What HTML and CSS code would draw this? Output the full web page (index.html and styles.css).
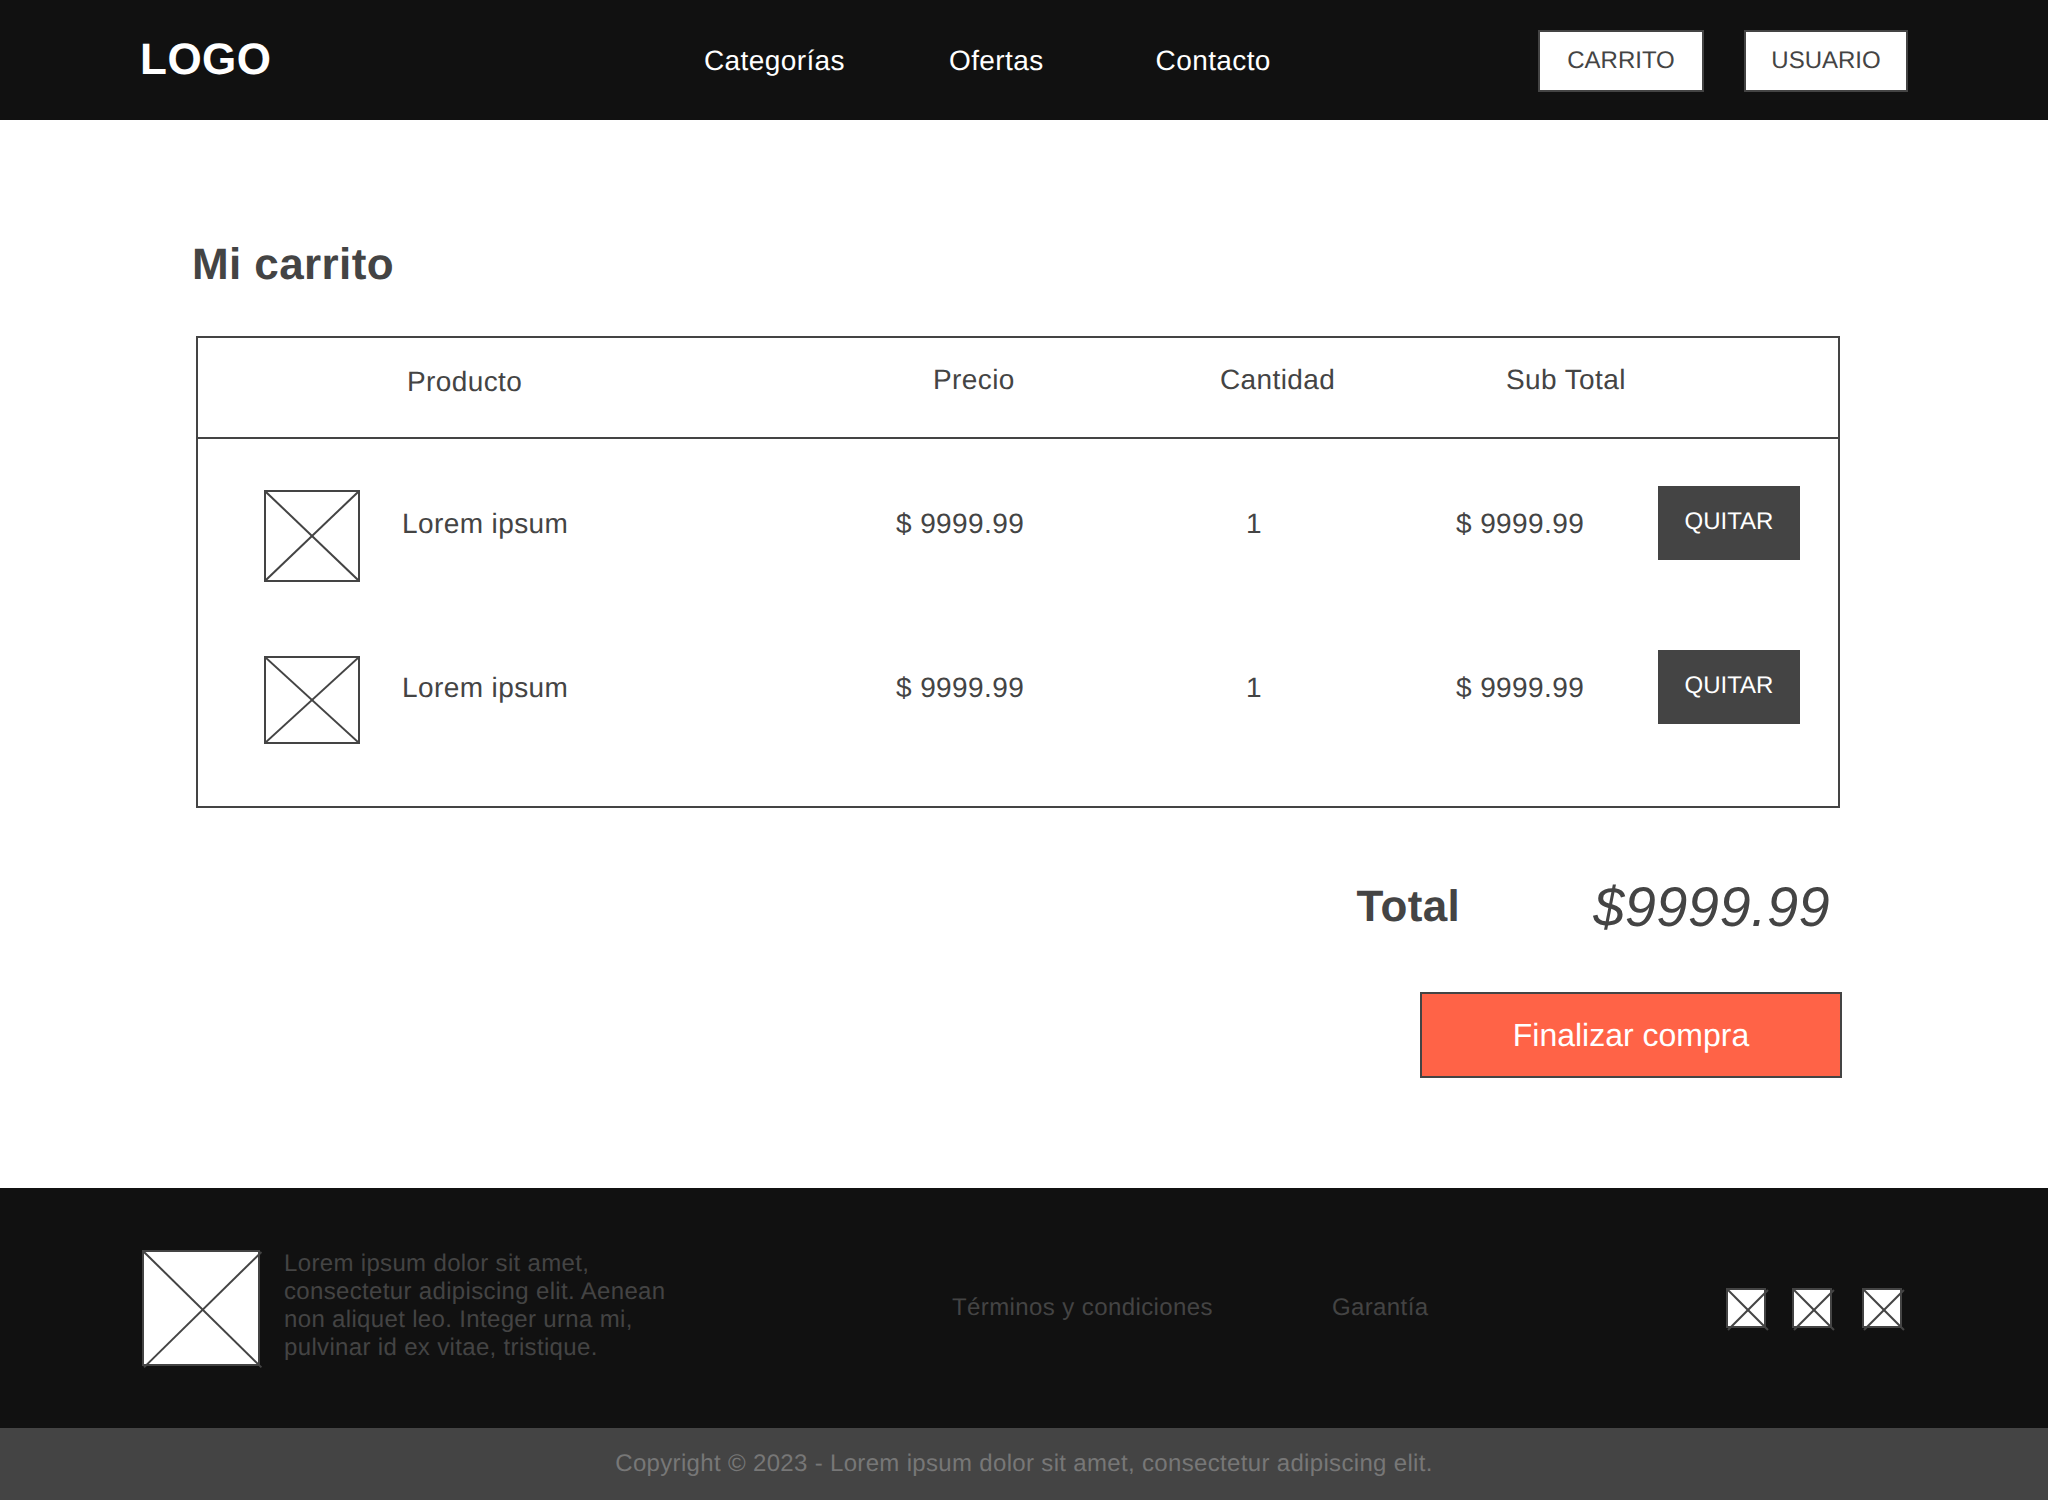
FILE: index.html
```html
<!DOCTYPE html>
<html>
<head>
    <title>Mi carrito</title>
    <link rel="stylesheet" href="styles.css">
</head>
<body>
<header class="header">
    <div class="logo">LOGO</div>
    <nav class="nav">
        <a href="#">Categorías</a>
        <a href="#">Ofertas</a>
        <a href="#" class="nav-last">Contacto</a>
    </nav>
    <div class="header-buttons">
        <button class="btn-outline btn-cart">CARRITO</button>
        <button class="btn-outline btn-user">USUARIO</button>
    </div>
</header>

<main class="main">
    <h1 class="title">Mi carrito</h1>

    <div class="cart">
        <div class="cart-head">
            <span class="head-first">Producto</span>
            <span>Precio</span>
            <span>Cantidad</span>
            <span>Sub Total</span>
        </div>
        <div class="cart-body">
            <div class="cart-row">
                <svg class="ph ph-row1" viewBox="0 0 100 100" preserveAspectRatio="none">
                    <line x1="0" y1="0" x2="100" y2="100"/>
                    <line x1="100" y1="0" x2="0" y2="100"/>
                </svg>
                <span class="cell">Lorem ipsum</span>
                <span class="cell">$ 9999.99</span>
                <span class="cell">1</span>
                <span class="cell">$ 9999.99</span>
                <button class="btn-remove">QUITAR</button>
            </div>
            <div class="cart-row">
                <svg class="ph ph-row2" viewBox="0 0 100 100" preserveAspectRatio="none">
                    <line x1="0" y1="0" x2="100" y2="100"/>
                    <line x1="100" y1="0" x2="0" y2="100"/>
                </svg>
                <span class="cell">Lorem ipsum</span>
                <span class="cell">$ 9999.99</span>
                <span class="cell">1</span>
                <span class="cell">$ 9999.99</span>
                <button class="btn-remove">QUITAR</button>
            </div>
        </div>
    </div>

    <div class="total">
        <span class="total-label">Total</span>
        <span class="total-value">$9999.99</span>
    </div>
    <div class="checkout">
        <button class="btn-checkout">Finalizar compra</button>
    </div>
</main>

<footer class="footer">
    <div class="footer-about">
        <svg class="ph ph-footer ph-over" viewBox="0 0 100 100" preserveAspectRatio="none">
            <line x1="0" y1="0" x2="103" y2="103"/>
            <line x1="103" y1="0" x2="0" y2="103"/>
        </svg>
        <p class="footer-text">Lorem ipsum dolor sit amet,<br>consectetur adipiscing elit. Aenean<br>non aliquet leo. Integer urna mi,<br>pulvinar id ex vitae, tristique.</p>
    </div>
    <div class="footer-links">
        <a href="#">Términos y condiciones</a>
        <a href="#">Garantía</a>
    </div>
    <div class="footer-social">
        <svg class="ph ph-social ph-over" viewBox="0 0 100 100" preserveAspectRatio="none">
            <line x1="0" y1="0" x2="111" y2="111"/>
            <line x1="111" y1="0" x2="0" y2="111"/>
        </svg>
        <svg class="ph ph-social ph-over" viewBox="0 0 100 100" preserveAspectRatio="none">
            <line x1="0" y1="0" x2="111" y2="111"/>
            <line x1="111" y1="0" x2="0" y2="111"/>
        </svg>
        <svg class="ph ph-social ph-over" viewBox="0 0 100 100" preserveAspectRatio="none">
            <line x1="0" y1="0" x2="111" y2="111"/>
            <line x1="111" y1="0" x2="0" y2="111"/>
        </svg>
    </div>
</footer>
<div class="copyright">Copyright © 2023 - Lorem ipsum dolor sit amet, consectetur adipiscing elit.</div>
</body>
</html>
```

FILE: styles.css
```css
* {
    box-sizing: border-box;
}
body {
    font-family: "Liberation Sans", Arial, sans-serif;
    background-color: #fff;
    color: #444;
    margin: 0;
    padding: 0;
    letter-spacing: 0.4px;
    text-rendering: geometricPrecision;
}
a {
    text-decoration: none;
    color: inherit;
}
button {
    font-family: inherit;
    letter-spacing: normal;
    text-rendering: geometricPrecision;
    cursor: pointer;
}

/* header */
.header {
    height: 120px;
    background-color: #111;
    display: flex;
    align-items: center;
    padding: 0 140px;
}
.logo {
    width: 564px;
    font-size: 44px;
    font-weight: bold;
    letter-spacing: 0.5px;
    color: #fff;
}
.nav {
    display: flex;
    gap: 104px;
    padding-top: 2px;
    font-size: 28px;
    color: #fff;
}
.nav-last {
    margin-left: 8px;
}
.header-buttons {
    display: flex;
    gap: 40px;
    margin-left: auto;
    padding-top: 2px;
}
.btn-outline {
    height: 62px;
    padding: 0;
    background-color: #fff;
    border: 2px solid #444;
    font-size: 24px;
    color: #444;
}
.btn-cart {
    width: 166px;
}
.btn-user {
    width: 164px;
}

/* cart */
.main {
    height: 1068px;
    padding: 120px 208px 0 192px;
}
.title {
    margin: 0;
    font-size: 44px;
    line-height: 50px;
    color: #444;
}
.cart {
    margin: 46px 0 0 4px;
    border: 2px solid #444;
    height: 472px;
}
.cart-head {
    height: 101px;
    border-bottom: 2px solid #444;
    display: grid;
    grid-template-columns: 526px 287px 286px auto;
    padding: 26px 0 0 209px;
    font-size: 28px;
    line-height: 32px;
}
.head-first {
    padding-top: 2px;
}
.cart-body {
    padding-top: 47px;
}
.cart-row {
    height: 164px;
    display: grid;
    grid-template-columns: 138px 494px 350px 210px 202px 142px;
    align-items: start;
    padding-left: 66px;
    font-size: 28px;
    line-height: 32px;
}
.cell {
    padding-top: 22px;
}
.btn-remove {
    width: 142px;
    height: 74px;
    padding: 0 0 3px;
    background-color: #444;
    border: none;
    font-size: 24px;
    color: #fff;
}

/* placeholder images */
.ph {
    display: block;
    background-color: #fff;
    border: 2px solid #444;
}
.ph line {
    stroke: #444;
    stroke-width: 2;
    vector-effect: non-scaling-stroke;
}
.ph-over {
    overflow: visible;
}
.ph-row1 {
    width: 96px;
    height: 92px;
    margin-top: 4px;
}
.ph-row2 {
    width: 96px;
    height: 88px;
    margin-top: 6px;
}
.ph-footer {
    width: 118px;
    height: 116px;
    flex-shrink: 0;
}
.ph-social {
    width: 40px;
    height: 40px;
}

/* total */
.total {
    display: flex;
    align-items: flex-start;
    justify-content: flex-end;
    margin-top: 67px;
    padding-right: 10px;
}
.total-label {
    font-size: 44px;
    line-height: 50px;
    font-weight: bold;
    margin-top: 7px;
    margin-right: 133px;
}
.total-value {
    font-size: 56px;
    line-height: 64px;
    font-style: italic;
}
.checkout {
    display: flex;
    justify-content: flex-end;
    margin-top: 53px;
}
.btn-checkout {
    width: 422px;
    height: 86px;
    margin-right: -2px;
    background-color: #ff6347;
    border: 2px solid #444;
    font-size: 32px;
    color: #fff;
}

/* footer */
.footer {
    height: 240px;
    background-color: #111;
    color: #444;
    display: flex;
    padding: 62px 146px 0 142px;
}
.footer-about {
    display: flex;
    gap: 24px;
    width: 810px;
}
.footer-text {
    margin: 0;
    font-size: 24px;
    line-height: 28px;
    letter-spacing: 0.34px;
}
.footer-links {
    display: flex;
    gap: 119px;
    font-size: 24px;
    line-height: 28px;
    padding-top: 44px;
}
.footer-social {
    display: flex;
    gap: 26px;
    margin-left: auto;
    padding-top: 38px;
}
.footer-social .ph:last-child {
    margin-left: 4px;
}
.copyright {
    height: 72px;
    background-color: #444;
    color: #777;
    display: flex;
    align-items: center;
    justify-content: center;
    font-size: 24px;
    letter-spacing: 0.33px;
}
```
